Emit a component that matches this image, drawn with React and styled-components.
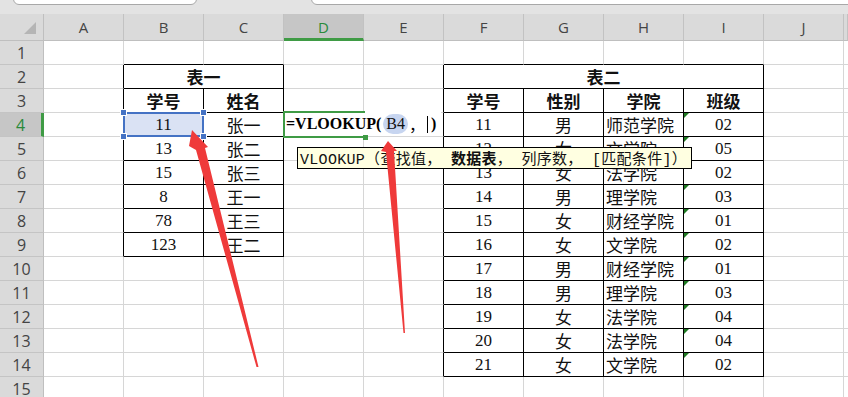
import React from "react";
import styled, { createGlobalStyle } from "styled-components";

const GREEN = "#3f9b45";
const GREEN_TEXT = "#2a8a3a";
const BLUE = "#4472c4";
const GRID = "#d6d6d6";

const COLS = ["A", "B", "C", "D", "E", "F", "G", "H", "I", "J", ""];
const ROWS = Array.from({ length: 15 }, (_, i) => i + 1);

// table areas (row range, column index range)
const TABLES = [
  { r0: 2, r1: 9, c0: 1, c1: 2 },
  { r0: 2, r1: 14, c0: 5, c1: 8 },
];

const inTable = (r, c) =>
  TABLES.some((t) => r >= t.r0 && r <= t.r1 && c >= t.c0 && c <= t.c1);

const people = [
  ["11", "张一"],
  ["13", "张二"],
  ["15", "张三"],
  ["8", "王一"],
  ["78", "王三"],
  ["123", "王二"],
];

const students = [
  ["11", "男", "师范学院", "02"],
  ["12", "女", "文学院", "05"],
  ["13", "女", "法学院", "02"],
  ["14", "男", "理学院", "03"],
  ["15", "女", "财经学院", "01"],
  ["16", "女", "文学院", "02"],
  ["17", "男", "财经学院", "01"],
  ["18", "男", "理学院", "03"],
  ["19", "女", "法学院", "04"],
  ["20", "女", "法学院", "04"],
  ["21", "女", "文学院", "02"],
];

const cells = {};
cells["2-1"] = { text: "表一", bold: true, span: 2 };
cells["2-5"] = { text: "表二", bold: true, span: 4 };
["学号", "姓名"].forEach((t, i) => (cells[`3-${1 + i}`] = { text: t, bold: true }));
["学号", "性别", "学院", "班级"].forEach(
  (t, i) => (cells[`3-${5 + i}`] = { text: t, bold: true })
);
people.forEach((p, i) => {
  cells[`${4 + i}-1`] = { text: p[0] };
  cells[`${4 + i}-2`] = { text: p[1] };
});
students.forEach((s, i) => {
  cells[`${4 + i}-5`] = { text: s[0] };
  cells[`${4 + i}-6`] = { text: s[1] };
  cells[`${4 + i}-7`] = { text: s[2], align: "flex-start" };
  cells[`${4 + i}-8`] = { text: s[3], flag: true };
});

const GlobalStyle = createGlobalStyle`
  html, body {
    margin: 0;
    padding: 0;
    background: #fff;
    overflow: hidden;
  }
  #root {
    width: 848px;
    height: 397px;
  }
`;

const Page = styled.div`
  position: relative;
  width: 848px;
  height: 397px;
  overflow: hidden;
  background: #fff;
  font-family: "Liberation Serif", "Noto Sans CJK SC", serif;
`;

const TopStrip = styled.div`
  height: 14px;
  background: #e3e3e3;
  display: flex;
  align-items: flex-start;
  gap: 114px;
  padding-left: 13px;
  overflow: hidden;
`;

const NameBox = styled.div`
  flex: none;
  width: ${(p) => p.$w}px;
  height: 21px;
  margin-top: -16px;
  box-sizing: border-box;
  background: #fff;
  border: 1px solid #a8a8a8;
  border-radius: 6px;
`;

const Sheet = styled.div`
  display: grid;
  grid-template-columns: 44px repeat(10, 80px) 4px;
  grid-template-rows: 27px repeat(15, 24px);
`;

const Corner = styled.div`
  position: relative;
  background: #dadada;
  border-right: 1px solid #bfbfbf;
  border-bottom: 1px solid #bfbfbf;
  &::after {
    content: "";
    position: absolute;
    right: 7px;
    bottom: 6px;
    border-left: 12px solid transparent;
    border-bottom: 12px solid #b5b5b5;
  }
`;

const ColHeader = styled.div`
  box-sizing: border-box;
  display: flex;
  align-items: center;
  justify-content: center;
  background: ${(p) => (p.$active ? "#c6c6c6" : "#dadada")};
  border-right: 1px solid #c2c2c2;
  border-bottom: ${(p) => (p.$active ? `3px solid ${GREEN}` : "1px solid #bfbfbf")};
  padding-top: ${(p) => (p.$active ? "2px" : "0")};
  color: ${(p) => (p.$active ? GREEN_TEXT : "#444")};
  font-family: "Open Sans", "Liberation Sans", sans-serif;
  font-size: 15px;
`;

const RowHeader = styled.div`
  box-sizing: border-box;
  display: flex;
  align-items: center;
  justify-content: center;
  background: ${(p) => (p.$active ? "#c6c6c6" : "#dadada")};
  border-right: ${(p) => (p.$active ? `3px solid ${GREEN}` : "1px solid #bfbfbf")};
  border-bottom: 1px solid #c4c4c4;
  color: ${(p) => (p.$active ? GREEN_TEXT : "#444")};
  font-family: "Open Sans", "Liberation Sans", sans-serif;
  font-size: 16px;
`;

const Cell = styled.div`
  position: relative;
  z-index: ${(p) => p.$z || "auto"};
  box-sizing: border-box;
  display: flex;
  align-items: center;
  justify-content: ${(p) => p.$align || "center"};
  padding: 0 2px;
  grid-column: span ${(p) => p.$span || 1};
  border-right: 1px solid ${(p) => (p.$rb ? "#000" : GRID)};
  border-bottom: 1px solid ${(p) => (p.$bb ? "#000" : GRID)};
  background: ${(p) => (p.$selected ? "#dae2f4" : "#fff")};
  color: #111;
  font-size: 17px;
  font-weight: ${(p) => (p.$bold ? 700 : 400)};
  white-space: nowrap;
`;

const TextFlag = styled.span`
  position: absolute;
  left: 0;
  top: 0;
  border-top: 5px solid #1e7a22;
  border-right: 5px solid transparent;
`;

const SelectFrame = styled.div`
  position: absolute;
  left: -1px;
  top: -1px;
  right: -1px;
  bottom: -1px;
  border: 2px solid ${BLUE};
  pointer-events: none;
`;

const Handle = styled.span`
  position: absolute;
  width: 5px;
  height: 5px;
  background: ${BLUE};
  border: 1px solid #fff;
  ${(p) => (p.$top ? "top: -5px;" : "bottom: -5px;")}
  ${(p) => (p.$left ? "left: -5px;" : "right: -5px;")}
`;

const Editor = styled.div`
  position: absolute;
  left: -1px;
  top: -1px;
  width: 158px;
  height: 24px;
  display: flex;
  align-items: center;
  padding-left: 3px;
  box-sizing: border-box;
  background: #fff;
  color: #000;
  font-family: "Liberation Serif", "Noto Sans CJK SC", serif;
  font-size: 16px;
  font-weight: 700;
`;

const EditFrame = styled.div`
  position: absolute;
  left: -1px;
  top: -2px;
  width: 82px;
  height: 27px;
  box-sizing: border-box;
  border: 2px solid ${GREEN};
  border-right: none;
  pointer-events: none;
  &::after {
    content: "";
    position: absolute;
    right: -3px;
    bottom: -4px;
    width: 5px;
    height: 5px;
    background: ${GREEN};
  }
`;

const RefPill = styled.span`
  margin-left: 2px;
  padding: 1px 3px;
  border-radius: 10px;
  background: #c7d5f0;
  font-weight: 400;
  color: #111;
`;

const Comma = styled.span`
  font-family: "Noto Sans CJK SC", sans-serif;
  font-weight: 400;
  margin-left: 1px;
`;

const Caret = styled.span`
  display: inline-block;
  width: 1px;
  height: 17px;
  margin: 0 3px 0 2px;
  background: #000;
`;

const Tip = styled.div`
  position: absolute;
  left: 13px;
  top: 34px;
  z-index: 6;
  height: 22px;
  display: flex;
  align-items: center;
  padding: 0 4px 0 2px;
  box-sizing: border-box;
  background: #ffffe1;
  border: 1px solid #000;
  color: #111;
  font-family: "Liberation Mono", "Noto Sans CJK SC", monospace;
  font-size: 15px;
  font-weight: 400;
  letter-spacing: 0.3px;
  white-space: pre;
`;

const Arrows = styled.svg`
  position: absolute;
  left: 0;
  top: 0;
  z-index: 20;
  pointer-events: none;
`;

const renderCell = (r, c) => {
  const key = `${r}-${c}`;
  const d = cells[key] || {};
  const span = d.span || 1;
  const last = c + span - 1;
  const rb = inTable(r, last) || inTable(r, last + 1);
  const bb = inTable(r, c) || inTable(r + 1, c);
  const selected = r === 4 && c === 1;
  const editing = r === 4 && c === 3;

  return (
    <Cell
      key={key}
      $span={span}
      $rb={rb}
      $bb={bb}
      $bold={d.bold}
      $align={d.align}
      $selected={selected}
      $z={editing ? 8 : selected ? 7 : undefined}
    >
      {d.flag && <TextFlag />}
      {d.text}
      {selected && (
        <SelectFrame>
          <Handle $top $left />
          <Handle $top />
          <Handle $left />
          <Handle />
        </SelectFrame>
      )}
      {editing && (
        <>
          <Editor>
            =VLOOKUP(<RefPill>B4</RefPill>
            <Comma>，</Comma>
            <Caret />)
          </Editor>
          <EditFrame />
          <Tip>
            VLOOKUP（查找值， <b>数据表</b>， 列序数， [匹配条件]）
          </Tip>
        </>
      )}
    </Cell>
  );
};

const renderRow = (r) => {
  const out = [
    <RowHeader key={`h-${r}`} $active={r === 4}>
      {r}
    </RowHeader>,
  ];
  let c = 0;
  while (c < COLS.length) {
    const span = (cells[`${r}-${c}`] || {}).span || 1;
    out.push(renderCell(r, c));
    c += span;
  }
  return out;
};

export default function App() {
  return (
    <Page>
      <GlobalStyle />
      <TopStrip>
        <NameBox $w={184} />
        <NameBox $w={560} />
      </TopStrip>
      <Sheet>
        <Corner />
        {COLS.map((l, i) => (
          <ColHeader key={i} $active={l === "D"}>
            {l}
          </ColHeader>
        ))}
        {ROWS.map(renderRow)}
      </Sheet>
      <Arrows width="848" height="397" viewBox="0 0 848 397">
        <polygon
          fill="#ef3a3a"
          points="192,130 208,147 205,148 258.5,367 256.5,367 196,150 189,146"
        />
        <polygon
          fill="#ef3a3a"
          points="388,141 397,151 394,151 405,333 403.5,333 386,152 381,151"
        />
      </Arrows>
    </Page>
  );
}
